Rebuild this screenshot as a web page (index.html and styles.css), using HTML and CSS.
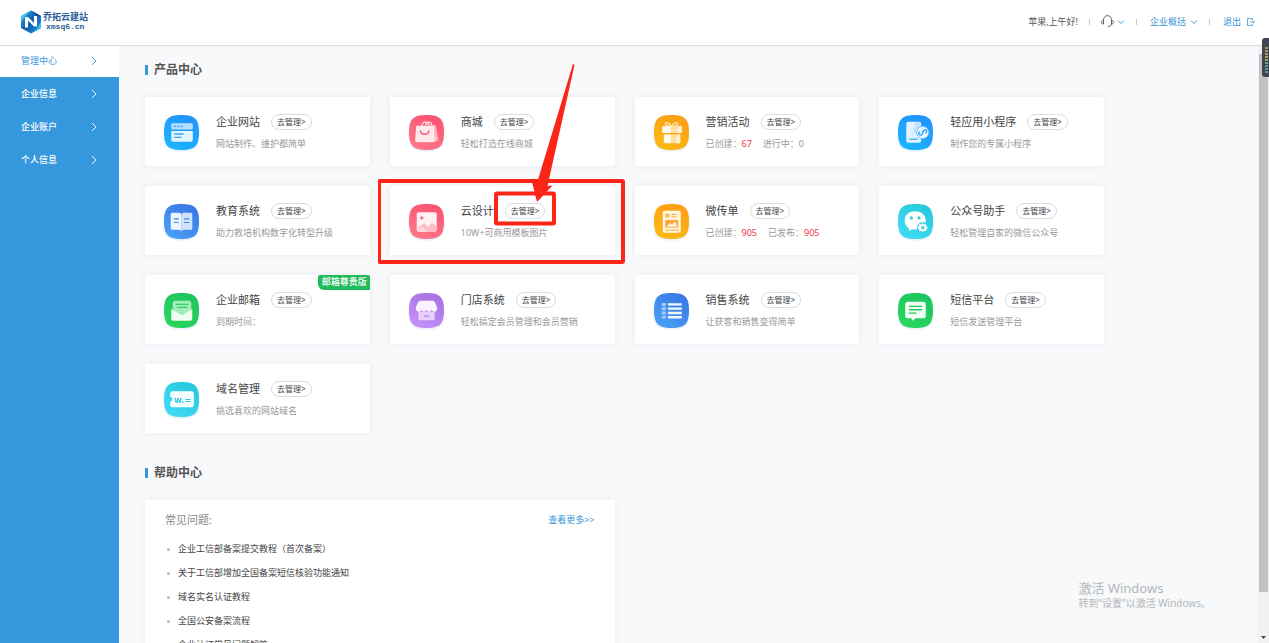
FILE: index.html
```html
<!DOCTYPE html>
<html lang="zh-CN">
<head>
<meta charset="utf-8">
<meta name="viewport" content="width=device-width, initial-scale=1">
<title>乔拓云建站</title>
<link rel="stylesheet" href="styles.css">
</head>
<body>
<svg class="defs" aria-hidden="true">
  <defs>
    <linearGradient id="g-sky" x1="0" y1="1" x2=".5" y2="0"><stop offset="0" stop-color="#1cb8fd"/><stop offset="1" stop-color="#2196fd"/></linearGradient>
    <linearGradient id="g-blue" x1="0" y1="1" x2=".7" y2="0"><stop offset="0" stop-color="#4ba3f8"/><stop offset="1" stop-color="#3a79e6"/></linearGradient>
    <linearGradient id="g-pink" x1="0" y1="1" x2=".5" y2="0"><stop offset="0" stop-color="#fd7c8b"/><stop offset="1" stop-color="#fb5573"/></linearGradient>
    <linearGradient id="g-gold" x1="0" y1="1" x2=".5" y2="0"><stop offset="0" stop-color="#fdbc10"/><stop offset="1" stop-color="#fe9f15"/></linearGradient>
    <linearGradient id="g-cyan" x1="0" y1="1" x2=".7" y2="0"><stop offset="0" stop-color="#45dcfa"/><stop offset="1" stop-color="#27c9dc"/></linearGradient>
    <linearGradient id="g-green" x1="0" y1="1" x2=".5" y2="0"><stop offset="0" stop-color="#2cd75c"/><stop offset="1" stop-color="#1fc65f"/></linearGradient>
    <linearGradient id="g-violet" x1="0" y1="1" x2=".5" y2="0"><stop offset="0" stop-color="#c794fb"/><stop offset="1" stop-color="#a974e3"/></linearGradient>
    <linearGradient id="g-logo" x1="0" y1="0" x2="1" y2="1"><stop offset="0" stop-color="#24b2ec"/><stop offset=".5" stop-color="#145cab"/><stop offset="1" stop-color="#1a9fe0"/></linearGradient>
    <path id="tile" d="M18 1C31 1 35 5 35 18S31 35 18 35 1 31 1 18 5 1 18 1z"/>
    <symbol id="chev-r" viewBox="0 0 6 10"><path d="M1 1l4 4-4 4" fill="none" stroke="currentColor" stroke-width=".9"/></symbol>
    <symbol id="chev-d" viewBox="0 0 8 6"><path d="M1 1.500l3 3 3-3" fill="none" stroke="currentColor" stroke-width=".9"/></symbol>
  </defs>
</svg>

<header class="topbar">
  <a class="brand" href="#">
    <svg class="brand-mark" viewBox="0 0 22 24" aria-hidden="true">
      <path d="M11 .5l10 5.500v12l-10 5.500-10-5.500V6z" fill="url(#g-logo)"/>
      <path d="M11 .5L1 6v6l5-7z" fill="#45c4f3"/><path d="M11 23.500l10-5.500v-7l-4 8z" fill="#36baf0"/>
      <path d="M11 .5l10 5.500-4-.5z" fill="#0d4a94"/>
      <path d="M5 17.500V7h3l6 6V6h3v10.500h-3l-6-6V17.500z" fill="#fff"/>
    </svg>
    <span class="brand-text"><span class="brand-name">乔拓云建站</span><span class="brand-site">xmsq6.cn</span></span>
  </a>
  <nav class="tools">
    <span>苹果,上午好!</span>
    <i class="sep"></i>
    <button class="tool plain" type="button" aria-label="客服">
      <svg class="headset" viewBox="0 0 13 13"><path d="M2.500 9V5a4 4.400 0 0 1 8 0v4M2.500 5.500C.8 5.500.6 6 .6 7.200s.4 1.800 1.900 1.800M10.500 5.500c1.700 0 1.900.5 1.900 1.700S12 9 10.500 9c-.3 1.700-1.300 2.500-3.500 2.500" fill="none" stroke="#555" stroke-width=".9"/></svg>
      <svg class="chev-d" viewBox="0 0 8 6"><use href="#chev-d"/></svg>
    </button>
    <i class="sep"></i>
    <button class="tool" type="button">企业概括 <svg class="chev-d" viewBox="0 0 8 6"><use href="#chev-d"/></svg></button>
    <i class="sep"></i>
    <a class="tool exit" href="#">退出 <svg class="exit-icon" viewBox="0 0 8 8"><path d="M5.500 2V.6h-5v6.800h5V6M3 4h4.400M5.900 2.400L7.500 4 5.900 5.600" fill="none" stroke="currentColor" stroke-width=".8"/></svg></a>
  </nav>
</header>

<div class="shell">
  <nav class="sidebar">
    <a class="side-link active" href="#">管理中心<svg class="chev-r"><use href="#chev-r"/></svg></a>
    <a class="side-link" href="#">企业信息<svg class="chev-r"><use href="#chev-r"/></svg></a>
    <a class="side-link" href="#">企业账户<svg class="chev-r"><use href="#chev-r"/></svg></a>
    <a class="side-link" href="#">个人信息<svg class="chev-r"><use href="#chev-r"/></svg></a>
  </nav>

  <main class="content">
    <h2 class="heading">产品中心</h2>
    <div class="grid products">
      <article class="card">
        <svg class="icon" viewBox="0 0 36 36"><use href="#tile" fill="url(#g-sky)"/><rect x="8" y="9" width="21" height="6" rx="1.500" fill="#b5dfff"/><circle cx="11.500" cy="12" r=".9" fill="#2196fd"/><circle cx="14.800" cy="12" r=".9" fill="#2196fd"/><circle cx="18.100" cy="12" r=".9" fill="#2196fd"/><path d="M8 16.500h21V25a2 2 0 0 1-2 2H10a2 2 0 0 1-2-2z" fill="#e2f5ff"/><path d="M11 19.500h9M11 22.800h7" stroke="#2ba6f8" stroke-width="1.300"/></svg>
        <div class="info"><div class="title-row"><h3>企业网站</h3><button class="go" type="button">去管理&gt;</button></div><p>网站制作、维护都简单</p></div>
      </article>
      <article class="card">
        <svg class="icon" viewBox="0 0 36 36"><use href="#tile" fill="url(#g-pink)"/><path d="M22 11h5l2.500 14-2.500 2h-6z" fill="#ffb5c0"/><path d="M13.500 12.500c-.5-6 7-6 7 0M17 11c1-4 6-4 6 0" fill="none" stroke="#ffdce1" stroke-width="1.200"/><path d="M8 11.500h17l1 14a2 2 0 0 1-2 2H9a2 2 0 0 1-2-2z" fill="#ffe8eb"/><path d="M12 16c.5 5 8 5 8.500 0" fill="none" stroke="#fb5c78" stroke-width="1.400"/></svg>
        <div class="info"><div class="title-row"><h3>商城</h3><button class="go" type="button">去管理&gt;</button></div><p>轻松打造在线商城</p></div>
      </article>
      <article class="card">
        <svg class="icon" viewBox="0 0 36 36"><use href="#tile" fill="url(#g-gold)"/><path d="M18 12c-3-5-6-4-6-2s3 2 6 2 6 0 6-2-3-3-6 2z" fill="none" stroke="#fff1cf" stroke-width="1.100"/><path d="M9 12h9v6.500H9zM10.500 20H18v8.500h-6a1.500 1.500 0 0 1-1.500-1.500z" fill="#fffaf0"/><path d="M18 12h10v6.500H18zM18 20h8.500v7a1.500 1.500 0 0 1-1.500 1.500h-7z" fill="#ffe0a2"/><path d="M24 12h4v6.500h-4zM23 20h3.500v8.500H23z" fill="#fff3da"/></svg>
        <div class="info"><div class="title-row"><h3>营销活动</h3><button class="go" type="button">去管理&gt;</button></div><p class="stats"><span>已创建：<b>67</b></span><span>进行中：0</span></p></div>
      </article>
      <article class="card">
        <svg class="icon" viewBox="0 0 36 36"><use href="#tile" fill="url(#g-sky)"/><rect x="9" y="7.500" width="14.500" height="20.500" rx="2" fill="#e2f4ff"/><path d="M18 8h4a1 1 0 0 1 1 1v5l-9 8z" fill="#c3e5ff"/><path d="M12 24.500h8" stroke="#2ba0fa" stroke-width="1.200"/><circle cx="25" cy="18" r="6" fill="#eaf7ff" stroke="#57b8ff" stroke-width=".8"/><path d="M22.500 20.500a1.500 1.500 0 0 1 0-3M22.500 20.500c3 1 1.500-5 5-5a1.500 1.500 0 0 1 0 3" fill="none" stroke="#2196fd" stroke-width="1.200"/></svg>
        <div class="info"><div class="title-row"><h3>轻应用小程序</h3><button class="go" type="button">去管理&gt;</button></div><p>制作您的专属小程序</p></div>
      </article>

      <article class="card">
        <svg class="icon" viewBox="0 0 36 36"><use href="#tile" fill="url(#g-blue)"/><path d="M7.500 11q0-1.500 1.500-1.500h6.500q2.500 0 2.500 2v16q-1-1.500-3-1.500H9q-1.500 0-1.500-1.500z" fill="#edf5ff"/><path d="M18 11.500q0-2 2.500-2H27q1.500 0 1.500 1.500v13.500q0 1.500-1.500 1.500h-6q-2 0-3 1.500z" fill="#cfe2fd"/><path d="M10.500 15.500h5M10.500 19h5M20.500 15.500h5M20.500 19h5" stroke="#4388ea" stroke-width="1.100"/></svg>
        <div class="info"><div class="title-row"><h3>教育系统</h3><button class="go" type="button">去管理&gt;</button></div><p>助力教培机构数字化转型升级</p></div>
      </article>
      <article class="card marked">
        <svg class="icon" viewBox="0 0 36 36"><use href="#tile" fill="url(#g-pink)"/><rect x="8.500" y="9" width="19.500" height="19" rx="2" fill="#fff0f2"/><circle cx="13.500" cy="14.500" r="1.500" fill="#fb6a82"/><path d="M8.500 25l7-5.500 4 3.500 4-4 4.500 4v3q0 2-2 2H10.500q-2 0-2-2z" fill="#ffbdc6"/><path d="M8.500 25l6-1.500 4 4.500h-8q-2 0-2-2z" fill="#ffd7dd"/></svg>
        <div class="info"><div class="title-row"><h3>云设计</h3><button class="go" type="button">去管理&gt;</button></div><p>10W+可商用模板图片</p></div>
        <svg class="marker" viewBox="0 0 250 202" aria-hidden="true"><g fill="none" stroke="#fd2518" stroke-linejoin="round"><rect x="1" y="117" width="244" height="81" rx="1" stroke-width="4"/><rect x="118" y="129.500" width="58" height="30" rx="1" stroke-width="4"/></g><path d="M195 0l1.500 1-27 121 5-.5-15.500 16.500-5-20 5 1z" fill="#fd2518"/></svg>
      </article>
      <article class="card">
        <svg class="icon" viewBox="0 0 36 36"><use href="#tile" fill="url(#g-gold)"/><rect x="9.500" y="7.500" width="17.500" height="21.500" rx="2" fill="#fff6e4"/><rect x="12" y="10.500" width="4" height="3.500" fill="#f9bb54"/><path d="M18 11h6M18 13.500h6M12 26.500h13" stroke="#f9b544" stroke-width="1.200" stroke-dasharray="4 .8"/><rect x="12" y="16.500" width="12.500" height="7.500" fill="#f9a640"/><path d="M13 23l3.500-3.500 2 1.500 3-3 2 5z" fill="#fff2d8"/></svg>
        <div class="info"><div class="title-row"><h3>微传单</h3><button class="go" type="button">去管理&gt;</button></div><p class="stats"><span>已创建：<b>905</b></span><span>已发布：<b>905</b></span></p></div>
      </article>
      <article class="card">
        <svg class="icon" viewBox="0 0 36 36"><use href="#tile" fill="url(#g-cyan)"/><path d="M17.500 8C11 8 7.500 12 7.500 17c0 3.500 1.700 6 4 7.300V27l3.500-1.500c8 1.500 13-3 13-8.500 0-5-4-9-10.500-9z" fill="#fff"/><circle cx="14" cy="14.500" r="1.500" fill="#30cce1"/><circle cx="21.500" cy="14.500" r="1.500" fill="#30cce1"/><circle cx="25" cy="24" r="5.500" fill="#36d2e9"/><path d="M25 19.500l1.300 1.300 1.800-.4.400 1.800 1.500 1.800-1.500 1.600-.4 2-1.900-.5L25 28.500l-1.300-1.400-1.800.5-.5-2L20 24l1.400-1.800.5-1.800 1.800.4z" fill="#fff"/><circle cx="25" cy="24" r="1.600" fill="#36d2e9"/></svg>
        <div class="info"><div class="title-row"><h3>公众号助手</h3><button class="go" type="button">去管理&gt;</button></div><p>轻松管理自家的微信公众号</p></div>
      </article>

      <article class="card">
        <svg class="icon" viewBox="0 0 36 36"><use href="#tile" fill="url(#g-green)"/><path d="M9.500 11q0-2.500 2.500-2.500h13q2.500 0 2.500 2.500v12h-18z" fill="#a2ecb7"/><path d="M12.500 12h12M13.500 15h10" stroke="#35cc68" stroke-width="1.200"/><path d="M8 16.500l10.500 6 10-6v9.500q0 2-2 2H10q-2 0-2-2z" fill="#effdf2"/></svg>
        <div class="info"><div class="title-row"><h3>企业邮箱</h3><button class="go" type="button">去管理&gt;</button></div><p>到期时间：</p></div>
        <span class="badge">邮箱尊贵版</span>
      </article>
      <article class="card">
        <svg class="icon" viewBox="0 0 36 36"><use href="#tile" fill="url(#g-violet)"/><path d="M10 19h16v7q0 1.500-1.500 1.500h-13Q10 27.500 10 26z" fill="#e6cffc"/><path d="M12 8.500h12q1.500 0 2.200 1.500l2 4.500q.8 3.500-1.700 4.500-2.300.5-3.500-1.500-2.500 3-5 0-2.500 3-5 0-1.200 2-3.500 1.500-2.500-1-1.700-4.500l2-4.500q.7-1.500 2.200-1.500z" fill="#faf3ff"/><path d="M15.500 23.500h5" stroke="#b783ec" stroke-width="1.300"/></svg>
        <div class="info"><div class="title-row"><h3>门店系统</h3><button class="go" type="button">去管理&gt;</button></div><p>轻松搞定会员管理和会员营销</p></div>
      </article>
      <article class="card">
        <svg class="icon" viewBox="0 0 36 36"><use href="#tile" fill="url(#g-blue)"/><path d="M8.500 12.200h4M8.500 16.300h4M8.500 20.400h4M8.500 24.500h4" stroke="#a5cbfa" stroke-width="2.800"/><path d="M14.500 12h13.500M14.500 16.200h13.500M14.500 20.400h13.500M14.500 24.600h13.500" stroke="#f2f7ff" stroke-width="2.300"/></svg>
        <div class="info"><div class="title-row"><h3>销售系统</h3><button class="go" type="button">去管理&gt;</button></div><p>让获客和销售变得简单</p></div>
      </article>
      <article class="card">
        <svg class="icon" viewBox="0 0 36 36"><use href="#tile" fill="url(#g-green)"/><path d="M10.500 9.500h15q2.500 0 2.500 2.500v11q0 2.500-2.500 2.500H18l-2.500 2.500-2-2.500h-3Q8 25.500 8 23V12q0-2.500 2.500-2.500z" fill="#effdf2"/><path d="M11.500 14h13M11.500 17.300h13M11.500 20.600h7.500" stroke="#27cb5e" stroke-width="1.300"/></svg>
        <div class="info"><div class="title-row"><h3>短信平台</h3><button class="go" type="button">去管理&gt;</button></div><p>短信发送管理平台</p></div>
      </article>

      <article class="card">
        <svg class="icon" viewBox="0 0 36 36"><use href="#tile" fill="url(#g-cyan)"/><path d="M9 10h19q2 0 2 2v11.500q0 2-2 2H9q-2 0-2-2V20a2.200 2.200 0 0 0 0-4.400V12q0-2 2-2z" fill="#f3fdff"/><text class="icon-text" x="11" y="21">w.=</text></svg>
        <div class="info"><div class="title-row"><h3>域名管理</h3><button class="go" type="button">去管理&gt;</button></div><p>挑选喜欢的网站域名</p></div>
      </article>
    </div>

    <h2 class="heading">帮助中心</h2>
    <div class="grid">
      <section class="help">
        <div class="help-head"><h3>常见问题:</h3><a href="#">查看更多&gt;&gt;</a></div>
        <ul>
          <li><a href="#">企业工信部备案提交教程（首次备案）</a></li>
          <li><a href="#">关于工信部增加全国备案短信核验功能通知</a></li>
          <li><a href="#">域名实名认证教程</a></li>
          <li><a href="#">全国公安备案流程</a></li>
          <li><a href="#">企业认证常见问题解答</a></li>
        </ul>
      </section>
    </div>
  </main>

  <div class="scroll" aria-hidden="true">
    <span class="thumb"></span>
    <svg class="scroll-arrow" viewBox="0 0 5 3"><path d="M0 0h5L2.500 3z" fill="#444"/></svg>
  </div>
</div>

<aside class="watermark"><strong>激活 Windows</strong><span>转到“设置”以激活 Windows。</span></aside>
<div class="meter" aria-hidden="true"><i></i></div>
</body>
</html>
```

FILE: styles.css
```css
* { box-sizing: border-box; }
body {
  margin: 0;
  height: 100vh;
  overflow: hidden;
  display: flex;
  flex-direction: column;
  background: #f7f9fb;
  color: #444;
  font: 9px/14px "Noto Sans", "Noto Sans CJK SC", sans-serif;
}
h2, h3, p, ul { margin: 0; padding: 0; font-weight: 400; }
a { color: inherit; text-decoration: none; }
button { font: inherit; color: inherit; background: none; border: 0; padding: 0; cursor: pointer; }
svg { flex: none; }
.defs { position: absolute; width: 0; height: 0; }

.topbar {
  flex: none;
  height: 46px;
  padding: 0 14px 2px 20px;
  display: flex;
  align-items: center;
  justify-content: space-between;
  background: #fff;
  border-bottom: 1px solid #d9dbde;
}
.brand { display: flex; align-items: center; gap: 1px; color: #2b5c97; font-weight: 700; }
.brand-mark { width: 22px; height: 24px; }
.brand-text { display: flex; flex-direction: column; }
.brand-name { line-height: 11px; }
.brand-site { padding-left: 3px; font: 700 8px/10px "Liberation Mono", monospace; }
.tools { display: flex; align-items: center; color: #555; }
.sep { width: 1px; height: 6px; margin: 0 11px; background: #c8c8c8; }
.tool { display: flex; align-items: center; gap: 4px; padding-left: 2px; color: #3795d8; }
.tool.plain { padding-left: 0; gap: 3px; }
.tool.exit { gap: 6px; }
.headset { width: 13px; height: 13px; }
.chev-d { width: 8px; height: 6px; }
.exit-icon { width: 8px; height: 8px; }

.shell { flex: 1; min-height: 0; display: flex; }
.sidebar { flex: none; width: 119px; background: #3598dc; color: #fff; font-weight: 500; }
.side-link {
  height: 33px;
  padding: 0 22px 0 21px;
  display: flex;
  align-items: center;
  justify-content: space-between;
}
.side-link.active { height: 31px; padding-bottom: 2px; background: #fff; color: #3598dc; font-weight: 400; }
.chev-r { width: 6px; height: 10px; }

.content { flex: 1; min-width: 0; padding: 17px 26px 0; overflow: hidden; }
.heading {
  display: flex;
  align-items: center;
  gap: 6px;
  margin-bottom: 20px;
  color: #555;
  font-size: 12px;
  font-weight: 700;
  line-height: 14px;
}
.heading::before { content: ""; width: 3px; height: 10px; background: #3598dc; }
.grid {
  display: grid;
  grid-template-columns: repeat(4, minmax(0, 1fr));
  gap: 20px;
  max-width: 959px;
}
.products { margin-bottom: 33px; }
.card, .help { background: #fff; border-radius: 2px; box-shadow: 0 0 6px rgba(40, 60, 90, .07); }
.card { position: relative; display: flex; gap: 16px; padding: 17px 0 15px 18px; }
.marked { z-index: 1; }
.icon { width: 37px; height: 37px; overflow: visible; filter: drop-shadow(0 1px 1px rgba(50, 140, 220, .2)); }
.icon-text { font: 700 8px "DejaVu Sans", sans-serif; fill: #2fc5e2; }
.info { min-width: 0; display: flex; flex-direction: column; gap: 7px; white-space: nowrap; }
.title-row { display: flex; align-items: center; gap: 11px; height: 16px; }
.title-row h3 { font-size: 11px; line-height: 16px; }
.go {
  height: 16px;
  padding: 0 5px;
  border: 1px solid #ddd;
  border-radius: 8px;
  font-size: 8px;
  line-height: 14px;
}
.info p { color: #999; }
.info .stats { display: flex; gap: 11px; }
.stats b { color: #f0343a; font-weight: 400; }
.badge {
  position: absolute;
  top: 0;
  right: 0;
  padding: 0 3px 1px 4px;
  border-radius: 2px 2px 0 6px;
  background: #21bb5b;
  color: #fff;
  font-weight: 500;
}
.marker { position: absolute; left: -12px; top: -122px; width: 250px; height: 202px; pointer-events: none; }

.help { grid-column: span 2; padding: 13px 20px; }
.help-head { display: flex; justify-content: space-between; align-items: center; margin-bottom: 10px; }
.help-head h3 { color: #888; font-size: 11px; line-height: 14px; }
.help-head a { color: #3795d8; }
.help ul { list-style: none; }
.help li { display: flex; align-items: center; gap: 8px; padding-left: 2px; line-height: 24px; }
.help li::before { content: ""; width: 3px; height: 3px; border-radius: 2px; background: #b5b5b5; }

.scroll {
  flex: none;
  width: 11px;
  padding: 8px 1px 4px;
  display: flex;
  flex-direction: column;
  justify-content: space-between;
  align-items: center;
  background: #f1f1f1;
}
.thumb { width: 9px; height: 92%; background: #c1c1c1; }
.scroll-arrow { width: 5px; height: 3px; }

.watermark {
  position: absolute;
  right: 58px;
  bottom: 32px;
  display: flex;
  flex-direction: column;
  color: #b4b7ba;
  font-size: 10px;
  line-height: 15px;
}
.watermark strong { font-size: 13px; font-weight: 400; line-height: 16px; }
.meter {
  position: absolute;
  right: 0;
  top: 38px;
  width: 7px;
  height: 39px;
  padding: 9px 1px 4px 3px;
  border-radius: 3px 0 0 3px;
  background: #3f4652;
}
.meter i {
  display: block;
  height: 100%;
  background: repeating-linear-gradient(transparent 0 2px, #3f4652 2px 3px), linear-gradient(#b58a4e, #a3a851 40%, #5e9c7c 70%, #5197ad);
}
```
